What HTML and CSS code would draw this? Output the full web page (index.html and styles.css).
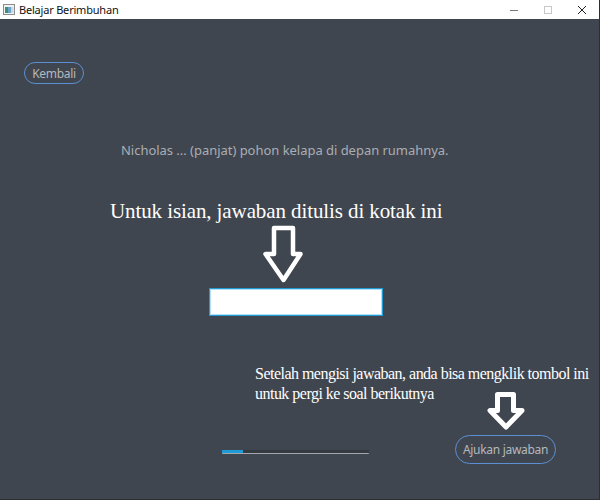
FILE: index.html
```html
<!DOCTYPE html>
<html>
<head>
<meta charset="utf-8">
<link rel="stylesheet" href="styles.css">
</head>
<body>
<div class="window">
  <div class="titlebar">
    <svg class="app-icon" width="12" height="11" viewBox="0 0 12 11">
      <rect x="0.5" y="0.5" width="11" height="10" fill="#f2f2f2" stroke="#8d8d8d"/>
      <rect x="2" y="3" width="3" height="6" fill="#3d8f7a"/>
      <rect x="5" y="3" width="3" height="6" fill="#6aa5c9"/>
      <rect x="8" y="3" width="2.5" height="6" fill="#c9d8e3"/>
    </svg>
    <span class="title">Belajar Berimbuhan</span>
    <div class="controls">
      <svg class="ctl" width="10" height="10" viewBox="0 0 10 10"><line x1="1" y1="5.5" x2="9" y2="5.5" stroke="#777" stroke-width="1"/></svg>
      <svg class="ctl" width="10" height="10" viewBox="0 0 10 10"><rect x="1.5" y="1.5" width="7" height="7" fill="none" stroke="#c8c8c8"/></svg>
      <svg class="ctl" width="10" height="10" viewBox="0 0 10 10"><path d="M1 1 L9 9 M9 1 L1 9" stroke="#222" stroke-width="1"/></svg>
    </div>
  </div>
  <div class="content">
    <button class="pill back">Kembali</button>
    <p class="question">Nicholas ... (panjat) pohon kelapa di depan rumahnya.</p>
    <p class="note note-big">Untuk isian, jawaban ditulis di kotak ini</p>
    <svg class="arrow arrow-1" width="42" height="58" viewBox="0 0 42 58">
      <path d="M12 3 L31 3 L31 29 L38.5 29 L21.5 55 L3.5 29 L12 29 Z" fill="none" stroke="#fff" stroke-width="4.5" stroke-linejoin="round"/>
    </svg>
    <input class="answer" type="text">
    <p class="note note-small">Setelah mengisi jawaban, anda bisa mengklik tombol ini<br>untuk pergi ke soal berikutnya</p>
    <div class="bottom-row">
      <div class="progress"><div class="progress-fill" style="width:21px"></div></div>
      <button class="pill submit">Ajukan jawaban</button>
    </div>
    <svg class="arrow arrow-2" width="40" height="40" viewBox="0 0 40 40">
      <path d="M10.5 3.5 L26.5 3.5 L26.5 19.5 L35 19.5 L19 36 L3 19.5 L10.5 19.5 Z" fill="none" stroke="#fff" stroke-width="5" stroke-linejoin="round"/>
    </svg>
  </div>
</div>
</body>
</html>
```
FILE: styles.css
```css
html, body {
  margin: 0;
  padding: 0;
}
body {
  width: 600px;
  height: 500px;
  overflow: hidden;
  background: #40464f;
}
.window {
  width: 600px;
  height: 500px;
  box-sizing: border-box;
  border-right: 1px solid #2b2f34;
  border-bottom: 1px solid #2b2f34;
  display: flex;
  flex-direction: column;
  background: #40464f;
}
.titlebar {
  height: 19px;
  flex: none;
  background: #ffffff;
  display: flex;
  align-items: center;
  font-family: "Noto Sans", "Open Sans", sans-serif;
  font-size: 11px;
  color: #111;
}
.app-icon {
  margin-left: 3px;
  margin-right: 4px;
}
.title {
  line-height: 19px;
  letter-spacing: -0.2px;
}
.controls {
  margin-left: auto;
  display: flex;
  align-items: center;
  gap: 24px;
  margin-right: 12px;
}
.content {
  flex: 1;
  position: relative;
  display: flex;
  flex-direction: column;
  align-items: flex-start;
}
.pill {
  font-family: "Noto Sans", "Open Sans", sans-serif;
  font-size: 12px;
  color: #b4b8bd;
  background: transparent;
  border: 1px solid #5b8fd2;
  border-radius: 999px;
  padding: 0;
  box-sizing: border-box;
  letter-spacing: -0.3px;
}
.back {
  margin: 43px 0 0 24px;
  width: 60px;
  height: 22px;
}
.question {
  margin: 57px 0 0 121px;
  font-family: "Noto Sans", "Open Sans", sans-serif;
  font-size: 13px;
  line-height: 18px;
  color: #a9aeb4;
  white-space: nowrap;
  letter-spacing: -0.03px;
}
.note {
  font-family: "Liberation Serif", "Times New Roman", serif;
  color: #ffffff;
  white-space: nowrap;
}
.note-big {
  margin: 40px 0 0 110px;
  font-size: 21px;
  line-height: 24px;
  letter-spacing: -0.1px;
}
.arrow-1 {
  display: block;
  margin: 2px 0 0 262px;
}
.answer {
  margin: 5px 0 0 209px;
  width: 174px;
  height: 28px;
  box-sizing: border-box;
  border: 1px solid #1f9ad3;
  box-shadow: inset 0 0 0 1px #b6e1f4;
  background: #fff;
  outline: none;
  padding: 0;
}
.note-small {
  margin: 48px 0 0 255px;
  font-size: 16px;
  line-height: 20px;
  letter-spacing: -0.52px;
}
.bottom-row {
  margin: 31px 0 0 222px;
  display: flex;
  align-items: flex-start;
}
.progress {
  margin-top: 15px;
  width: 147px;
  height: 4px;
  box-sizing: border-box;
  background: #353a41;
  border-bottom: 1px solid #a3a8ae;
  border-radius: 1px;
}
.progress-fill {
  height: 3px;
  background: #1e9ad6;
}
.submit {
  margin-left: 86px;
  width: 101px;
  height: 29px;
}
.arrow-2 {
  position: absolute;
  left: 487px;
  top: 372px;
}
```
